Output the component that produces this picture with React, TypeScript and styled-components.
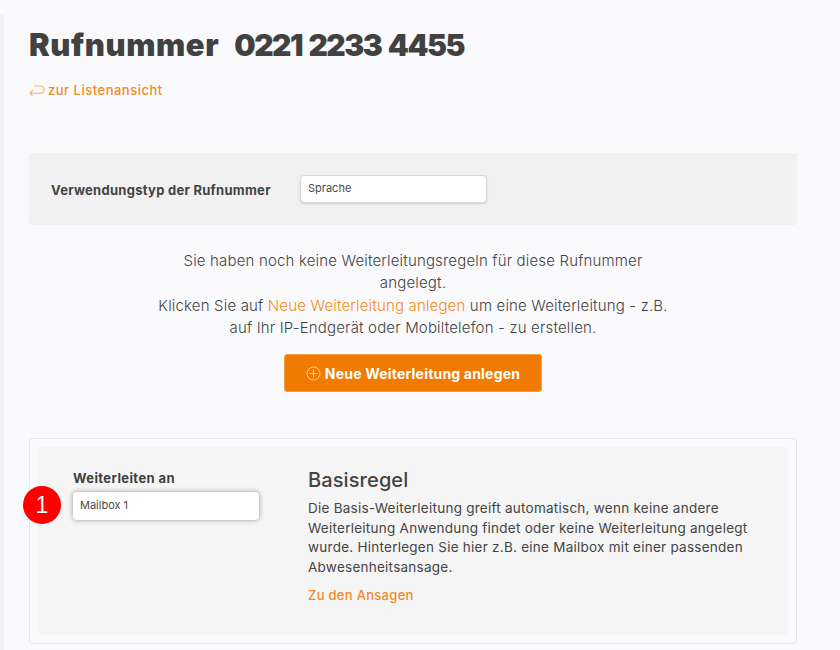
import React from "react";
import styled, { createGlobalStyle } from "styled-components";

const GlobalStyle = createGlobalStyle`
  html, body {
    margin: 0;
    padding: 0;
    height: 650px;
    overflow: hidden;
    background-color: #fafafc;
    font-family: Inter, "Liberation Sans", sans-serif;
    color: #434343;
  }
`;

const Page = styled.div`
  display: flex;
  width: 840px;
  height: 650px;
  overflow: hidden;
`;

const SideEdge = styled.div`
  flex: none;
  width: 4px;
  margin-top: 15px;
  background-color: #f1f1f3;
`;

const Main = styled.main`
  flex: none;
  width: 768px;
  margin-left: 25px;
  padding-top: 27px;
`;

const Title = styled.h1`
  display: flex;
  align-items: baseline;
  gap: 15px;
  margin: 0;
  font-size: 31px;
  line-height: 36px;
  font-weight: 900;
  color: #414141;
`;

const TitleWord = styled.span`
  letter-spacing: 0.6px;
`;

const TitleNumber = styled.span`
  font-size: 30px;
  letter-spacing: -1.5px;
  word-spacing: 2px;
`;

const BackLink = styled.a`
  display: flex;
  align-items: center;
  gap: 3px;
  margin-top: 18px;
  height: 18px;
  font-size: 13px;
  font-weight: 500;
  letter-spacing: 0.5px;
  color: #f28a1c;
`;

const UsagePanel = styled.section`
  display: flex;
  align-items: center;
  height: 72px;
  margin-top: 54px;
  padding-left: 22px;
  background-color: #f1f1f1;
  border-radius: 3px;
`;

const UsageLabel = styled.label`
  flex: none;
  width: 249px;
  margin-top: 2px;
  font-size: 13px;
  font-weight: 700;
  letter-spacing: 0.28px;
  color: #434343;
`;

const SelectBox = styled.div<{ $width: number; $raised?: boolean }>`
  box-sizing: border-box;
  width: ${(p) => p.$width}px;
  height: 28px;
  padding: 0 7px 3px;
  display: flex;
  align-items: center;
  background-color: #fff;
  border-radius: 4px;
  font-size: 11px;
  color: #4a4a4a;
  border: ${(p) => (p.$raised ? "none" : "1px solid #d9d9d9")};
  box-shadow: ${(p) =>
    p.$raised ? "0 0 5px rgba(0, 0, 0, 0.4)" : "0 1px 2px rgba(0, 0, 0, 0.15)"};
`;

const Notice = styled.p`
  margin: 25px 0 0;
  text-align: center;
  font-size: 15px;
  line-height: 22.3px;
  font-weight: 300;
  letter-spacing: 0.17px;
  color: #444;
`;

const Highlight = styled.span`
  color: #f28a1c;
`;

const ButtonRow = styled.div`
  display: flex;
  justify-content: center;
  margin-top: 15px;
`;

const PrimaryButton = styled.button`
  display: flex;
  align-items: center;
  justify-content: center;
  gap: 4px;
  width: 258px;
  height: 38px;
  padding: 0;
  border: 1px solid #f5a040;
  border-radius: 3px;
  background-color: #f17b00;
  color: #fff;
  font-family: inherit;
  font-size: 14px;
  font-weight: 700;
  letter-spacing: 0.2px;
`;

const RuleCard = styled.section`
  box-sizing: border-box;
  height: 206px;
  margin-top: 46px;
  padding: 8px;
  border: 1px solid #e6e6ea;
  border-radius: 3px;
`;

const RuleInner = styled.div`
  display: flex;
  height: 188px;
  background-color: #f5f5f5;
  border-radius: 3px;
`;

const TargetColumn = styled.div`
  position: relative;
  flex: none;
  width: 270px;
  padding: 22px 0 0 35px;
  box-sizing: border-box;
`;

const TargetLabel = styled.div`
  font-size: 13px;
  line-height: 18px;
  font-weight: 700;
  letter-spacing: 0.4px;
  color: #3f3f3f;
  margin-bottom: 5px;
`;

const Badge = styled.div`
  position: absolute;
  left: -15px;
  top: 39px;
  width: 38px;
  height: 38px;
  border-radius: 50%;
  background-color: #fe0000;
  color: #fff;
  display: flex;
  align-items: center;
  justify-content: center;
  font-family: "Liberation Sans", sans-serif;
  font-size: 23px;
`;

const RuleText = styled.div`
  flex: 1;
  padding: 21px 30px 0 0;
`;

const RuleTitle = styled.h2`
  margin: 0;
  font-size: 20px;
  line-height: 24px;
  font-weight: 500;
  letter-spacing: 0.1px;
  color: #434343;
`;

const RuleBody = styled.p`
  margin: 7px 0 0;
  font-size: 13.5px;
  line-height: 19.6px;
  font-weight: 400;
  letter-spacing: 0.25px;
  color: #444;
`;

const RuleLink = styled.a`
  display: block;
  margin-top: 9px;
  font-size: 13px;
  font-weight: 500;
  letter-spacing: 0.3px;
  color: #f28a1c;
`;

const ReturnIcon = () => (
  <svg width="16" height="13" viewBox="0 0 16 13" fill="none" stroke="#f6b36d" strokeWidth="1.1">
    <path d="M5 2h6.5a3.6 3.6 0 0 1 0 7.2H1M4 6 1 9.2l3 3" />
  </svg>
);

const PlusCircleIcon = () => (
  <svg width="15" height="15" viewBox="0 0 15 15" fill="none" stroke="#fbd2a4" strokeWidth="1">
    <circle cx="7.5" cy="7.5" r="6.5" />
    <path d="M7.5 3.5v8M3.5 7.5h8" />
  </svg>
);

const App: React.FC = () => {
  return (
    <Page>
      <GlobalStyle />
      <SideEdge />
      <Main>
        <Title>
          <TitleWord>Rufnummer</TitleWord>
          <TitleNumber>0221 2233 4455</TitleNumber>
        </Title>
        <BackLink>
          <ReturnIcon />
          zur Listenansicht
        </BackLink>

        <UsagePanel>
          <UsageLabel>Verwendungstyp der Rufnummer</UsageLabel>
          <SelectBox $width={187}>Sprache</SelectBox>
        </UsagePanel>

        <Notice>
          Sie haben noch keine Weiterleitungsregeln für diese Rufnummer
          <br />
          angelegt.
          <br />
          Klicken Sie auf <Highlight>Neue Weiterleitung anlegen</Highlight> um eine Weiterleitung - z.B.
          <br />
          auf Ihr IP-Endgerät oder Mobiltelefon - zu erstellen.
        </Notice>

        <ButtonRow>
          <PrimaryButton>
            <PlusCircleIcon />
            Neue Weiterleitung anlegen
          </PrimaryButton>
        </ButtonRow>

        <RuleCard>
          <RuleInner>
            <TargetColumn>
              <TargetLabel>Weiterleiten an</TargetLabel>
              <SelectBox $width={186} $raised>Mailbox 1</SelectBox>
              <Badge>1</Badge>
            </TargetColumn>
            <RuleText>
              <RuleTitle>Basisregel</RuleTitle>
              <RuleBody>
                Die Basis-Weiterleitung greift automatisch, wenn keine andere
                <br />
                Weiterleitung Anwendung findet oder keine Weiterleitung angelegt
                <br />
                wurde. Hinterlegen Sie hier z.B. eine Mailbox mit einer passenden
                <br />
                Abwesenheitsansage.
              </RuleBody>
              <RuleLink>Zu den Ansagen</RuleLink>
            </RuleText>
          </RuleInner>
        </RuleCard>
      </Main>
    </Page>
  );
};

export default App;
